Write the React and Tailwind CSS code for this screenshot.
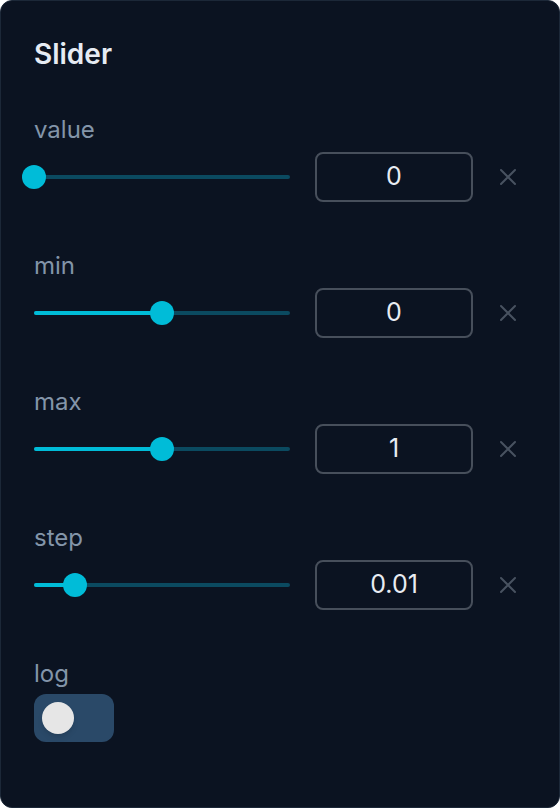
import { useState } from "react";

const rows = [
  { name: "value", val: "0", pct: 0 },
  { name: "min", val: "0", pct: 50 },
  { name: "max", val: "1", pct: 50 },
  { name: "step", val: "0.01", pct: 16 },
];

function Slider({ pct }) {
  return (
    <div className="relative w-[256px] h-[24px] flex items-center">
      <div className="w-full h-[4px] rounded-full bg-[#0b4a60]" />
      <div
        className="absolute left-0 h-[4px] rounded-full bg-[#00bcd8]"
        style={{ width: `${pct}%` }}
      />
      <div
        className="absolute w-[24px] h-[24px] -ml-[12px] rounded-full bg-[#00bcd8]"
        style={{ left: `${pct}%` }}
      />
    </div>
  );
}

function ClearIcon() {
  return (
    <svg width="18" height="18" viewBox="0 0 18 18" fill="none">
      <path
        d="M2 2L16 16M16 2L2 16"
        stroke="#485260"
        strokeWidth="2"
        strokeLinecap="round"
      />
    </svg>
  );
}

export default function App() {
  const [log, setLog] = useState(false);

  return (
    <div
      className="w-[560px] h-[808px] bg-[#0b1321] border border-[#1c2838] rounded-[12px] px-[33px] pt-[35px]"
      style={{ fontFamily: "Inter, 'Noto Sans', sans-serif" }}
    >
      <h1 className="text-[28px] leading-[36px] font-semibold text-[#e6ebf3]">
        Slider
      </h1>

      <div className="mt-[42px] flex flex-col gap-[48px]">
        {rows.map((r) => (
          <div key={r.name} className="flex flex-col gap-[6px]">
            <div className="text-[24px] leading-[32px] text-[#8395a9]">
              {r.name}
            </div>
            <div className="flex items-center h-[50px]">
              <Slider pct={r.pct} />
              <div className="ml-[25px] w-[158px] h-[50px] border-2 border-[#474f5b] rounded-[8px] flex items-center justify-center text-[25px] text-[#e8ecf2]">
                {r.val}
              </div>
              <div className="ml-[26px] flex items-center">
                <ClearIcon />
              </div>
            </div>
          </div>
        ))}

        <div className="flex flex-col gap-[4px]">
          <div className="text-[24px] leading-[32px] text-[#8395a9]">log</div>
          <button
            onClick={() => setLog(!log)}
            className="w-[80px] h-[48px] rounded-[12px] bg-[#2a4968] flex items-center px-[8px]"
          >
            <div
              className={
                log
                  ? "w-[32px] h-[32px] rounded-full bg-[#e6e6e6] shadow-md ml-auto"
                  : "w-[32px] h-[32px] rounded-full bg-[#e6e6e6] shadow-md"
              }
            />
          </button>
        </div>
      </div>
    </div>
  );
}
